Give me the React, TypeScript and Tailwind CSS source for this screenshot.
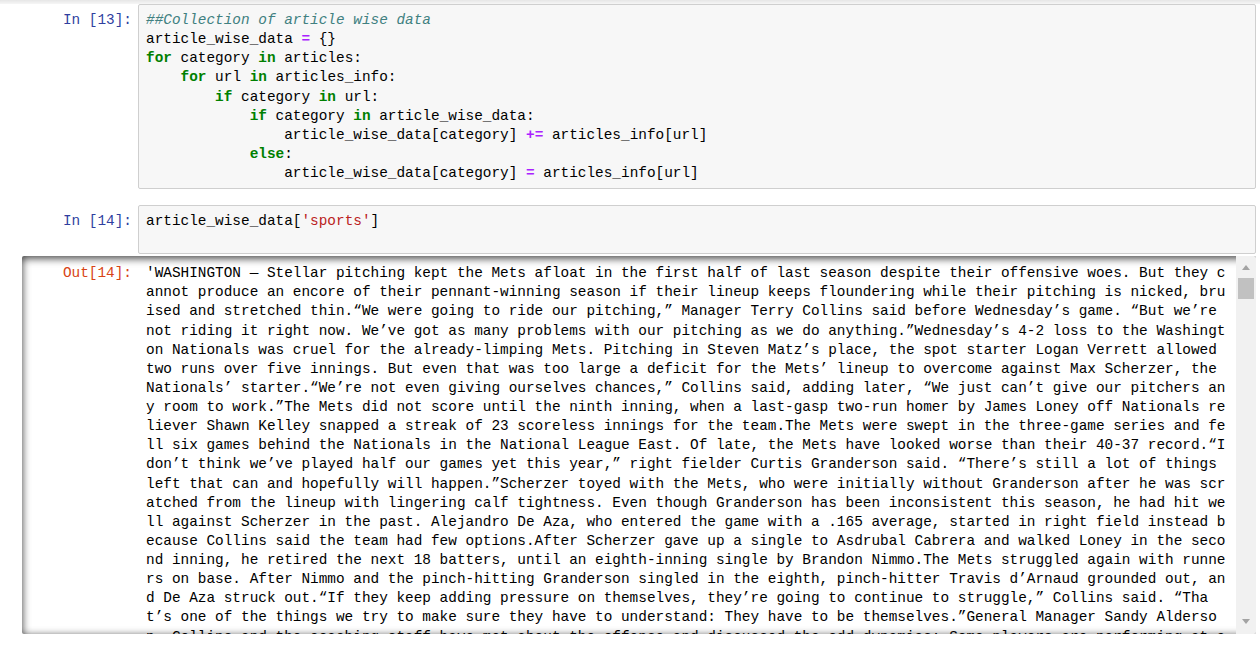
import { ReactNode } from "react"

const MONO = "font-['Liberation_Mono','DejaVu_Sans_Mono',monospace] text-[14.4px] leading-[19.125px]"

const Kw = ({ children }: { children: ReactNode }) => (
  <span className="font-bold text-[#008000]">{children}</span>
)
const Op = ({ children }: { children: ReactNode }) => (
  <span className="font-bold text-[#aa22ff]">{children}</span>
)

const OUTPUT_LINES = [
  "'WASHINGTON — Stellar pitching kept the Mets afloat in the first half of last season despite their offensive woes. But they c",
  "annot produce an encore of their pennant-winning season if their lineup keeps floundering while their pitching is nicked, bru",
  "ised and stretched thin.“We were going to ride our pitching,” Manager Terry Collins said before Wednesday’s game. “But we’re",
  "not riding it right now. We’ve got as many problems with our pitching as we do anything.”Wednesday’s 4-2 loss to the Washingt",
  "on Nationals was cruel for the already-limping Mets. Pitching in Steven Matz’s place, the spot starter Logan Verrett allowed",
  "two runs over five innings. But even that was too large a deficit for the Mets’ lineup to overcome against Max Scherzer, the",
  "Nationals’ starter.“We’re not even giving ourselves chances,” Collins said, adding later, “We just can’t give our pitchers an",
  "y room to work.”The Mets did not score until the ninth inning, when a last-gasp two-run homer by James Loney off Nationals re",
  "liever Shawn Kelley snapped a streak of 23 scoreless innings for the team.The Mets were swept in the three-game series and fe",
  "ll six games behind the Nationals in the National League East. Of late, the Mets have looked worse than their 40-37 record.“I",
  "don’t think we’ve played half our games yet this year,” right fielder Curtis Granderson said. “There’s still a lot of things",
  "left that can and hopefully will happen.”Scherzer toyed with the Mets, who were initially without Granderson after he was scr",
  "atched from the lineup with lingering calf tightness. Even though Granderson has been inconsistent this season, he had hit we",
  "ll against Scherzer in the past. Alejandro De Aza, who entered the game with a .165 average, started in right field instead b",
  "ecause Collins said the team had few options.After Scherzer gave up a single to Asdrubal Cabrera and walked Loney in the seco",
  "nd inning, he retired the next 18 batters, until an eighth-inning single by Brandon Nimmo.The Mets struggled again with runne",
  "rs on base. After Nimmo and the pinch-hitting Granderson singled in the eighth, pinch-hitter Travis d’Arnaud grounded out, an",
  "d De Aza struck out.“If they keep adding pressure on themselves, they’re going to continue to struggle,” Collins said. “Tha",
  "t’s one of the things we try to make sure they have to understand: They have to be themselves.”General Manager Sandy Alderso",
  "n. Collins and the coaching staff have met about the offense and discussed the odd dynamics: Some players are performing at a",
  "bove their norms while others are struggling badly.",
]

const Arrow = ({ down }: { down?: boolean }) => (
  <svg width="8" height="5" viewBox="0 0 8 5">
    <polygon points={down ? "0,0 8,0 4,5" : "0,5 8,5 4,0"} fill="#a3a3a3" />
  </svg>
)

export default function App() {
  return (
    <div className={`w-[1260px] h-[647px] overflow-hidden bg-white text-black ${MONO}`}>
      <div className="h-[4px] bg-linear-to-b from-[#e6e6e6] to-[#f6f6f6]" />

      {/* In [13] */}
      <div className="flex pl-[22px] pr-[4px]">
        <div className="w-[116px] shrink-0 pr-[6px] pt-[7px] text-right text-[#303f9f]">In [13]:</div>
        <div className="flex-1 rounded-[2px] border border-[#cfcfcf] bg-[#f7f7f7] pl-[7px] pt-[6px] pb-[5px]">
          <div className="whitespace-pre italic text-[#408080]">##Collection of article wise data</div>
          <div className="whitespace-pre">
            article_wise_data <Op>=</Op> {"{}"}
          </div>
          <div className="whitespace-pre">
            <Kw>for</Kw> category <Kw>in</Kw> articles:
          </div>
          <div className="whitespace-pre">
            {"    "}
            <Kw>for</Kw> url <Kw>in</Kw> articles_info:
          </div>
          <div className="whitespace-pre">
            {"        "}
            <Kw>if</Kw> category <Kw>in</Kw> url:
          </div>
          <div className="whitespace-pre">
            {"            "}
            <Kw>if</Kw> category <Kw>in</Kw> article_wise_data:
          </div>
          <div className="whitespace-pre">
            {"                "}article_wise_data[category] <Op>+=</Op> articles_info[url]
          </div>
          <div className="whitespace-pre">
            {"            "}
            <Kw>else</Kw>:
          </div>
          <div className="whitespace-pre">
            {"                "}article_wise_data[category] <Op>=</Op> articles_info[url]
          </div>
        </div>
      </div>

      {/* In [14] */}
      <div className="mt-[16px] flex pl-[22px] pr-[4px]">
        <div className="w-[116px] shrink-0 pr-[6px] pt-[7px] text-right text-[#303f9f]">In [14]:</div>
        <div className="h-[49px] flex-1 rounded-[2px] border border-[#cfcfcf] bg-[#f7f7f7] pl-[7px] pt-[6px]">
          <div className="whitespace-pre">
            article_wise_data[<span className="text-[#ba2121]">'sports'</span>]
          </div>
        </div>
      </div>

      {/* Out[14] */}
      <div className="mt-[2px] ml-[22px] mr-[4px] flex h-[378px] overflow-hidden rounded-[2px] shadow-[inset_0_2px_8px_rgba(0,0,0,0.8)]">
        <div className="w-[116px] shrink-0 pr-[6px] pt-[8px] text-right text-[#d84315]">Out[14]:</div>
        <div className="flex-1 overflow-hidden pl-[8px] pt-[8px]">
          {OUTPUT_LINES.map((line, i) => (
            <div key={i} className="whitespace-pre">
              {line}
            </div>
          ))}
        </div>
        <div className="flex w-[20px] shrink-0 flex-col bg-[#f1f1f1]">
          <div className="flex h-[22px] items-center justify-center pt-[1px]">
            <Arrow />
          </div>
          <div className="mx-[2px] h-[21px] bg-[#c1c1c1]" />
          <div className="flex-1" />
          <div className="mb-[3px] flex h-[20px] items-center justify-center">
            <Arrow down />
          </div>
        </div>
      </div>
    </div>
  )
}
